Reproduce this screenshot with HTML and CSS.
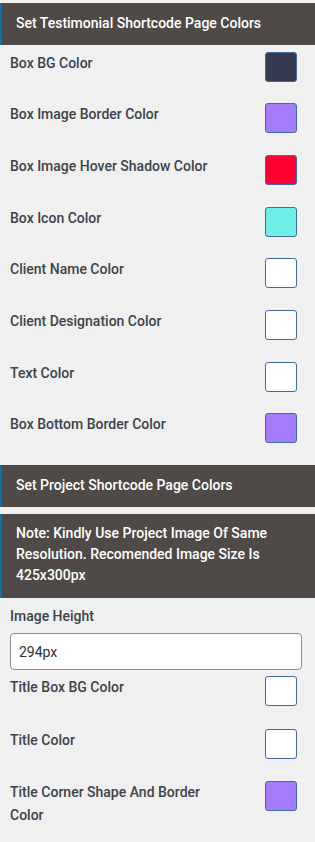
FILE: index.html
```html
<!DOCTYPE html>
<html>
<head>
<meta charset="utf-8">
<link rel="stylesheet" href="styles.css">
</head>
<body>
<div class="panel">
  <div class="section-head">Set Testimonial Shortcode Page Colors</div>
  <div class="row"><span class="label">Box BG Color</span><span class="swatch c-navy"></span></div>
  <div class="row"><span class="label">Box Image Border Color</span><span class="swatch c-purple"></span></div>
  <div class="row"><span class="label">Box Image Hover Shadow Color</span><span class="swatch c-red"></span></div>
  <div class="row"><span class="label">Box Icon Color</span><span class="swatch c-cyan"></span></div>
  <div class="row"><span class="label">Client Name Color</span><span class="swatch c-white"></span></div>
  <div class="row"><span class="label">Client Designation Color</span><span class="swatch c-white"></span></div>
  <div class="row"><span class="label">Text Color</span><span class="swatch c-white"></span></div>
  <div class="row"><span class="label">Box Bottom Border Color</span><span class="swatch c-purple"></span></div>

  <div class="section-head second">Set Project Shortcode Page Colors</div>
  <div class="note">Note: Kindly Use Project Image Of Same Resolution. Recomended Image Size Is 425x300px</div>

  <div class="field">
    <div class="label">Image Height</div>
    <input class="text-input" type="text" value="294px">
  </div>
  <div class="row tight"><span class="label">Title Box BG Color</span><span class="swatch c-white"></span></div>
  <div class="row"><span class="label">Title Color</span><span class="swatch c-white"></span></div>
  <div class="row"><span class="label narrow">Title Corner Shape And Border Color</span><span class="swatch c-purple"></span></div>
</div>
</body>
</html>
```

FILE: styles.css
```css
html, body {
  margin: 0;
  padding: 0;
  background: #f0f0f1;
}
body {
  font-family: Roboto, "Liberation Sans", sans-serif;
  font-size: 14px;
  color: #3c434a;
}
.panel {
  padding-top: 3px;
}
.section-head {
  background: #4f4a47;
  color: #ffffff;
  border-left: 2px solid #0a73b0;
  height: 41.5px;
  line-height: 41.5px;
  padding: 0 14px;
  font-weight: 500;
  font-size: 14px;
}
.section-head.second {
  margin-top: 7px;
}
.row {
  display: flex;
  justify-content: space-between;
  align-items: flex-start;
  height: 51.7px;
  padding: 7px 18px 0 10px;
  box-sizing: border-box;
}
.row.tight {
  padding-top: 6px;
}
.label {
  font-weight: 500;
  line-height: 23px;
}
.label.narrow {
  width: 200px;
}
.swatch {
  flex: none;
  width: 32px;
  height: 30px;
  box-sizing: border-box;
  border: 1px solid #3f6c9c;
  border-radius: 3px;
}
.c-navy { background: #353a50; }
.c-purple { background: #a67cfe; }
.c-red { background: #ff0033; }
.c-cyan { background: #6eeee6; }
.c-white { background: #ffffff; }
.note {
  margin-top: 7px;
  background: #4f4a47;
  color: #ffffff;
  border-left: 2px solid #0a73b0;
  padding: 9px 40px 12px 14px;
  line-height: 21.3px;
  font-weight: 500;
}
.field {
  padding: 7px 13px 0 10px;
}
.text-input {
  display: block;
  margin-top: 5px;
  width: 100%;
  height: 37px;
  box-sizing: border-box;
  border: 1px solid #8c8f94;
  border-radius: 4px;
  background: #fff;
  padding: 0 8px;
  font-family: Roboto, "Liberation Sans", sans-serif;
  font-size: 14px;
  color: #2c3338;
}
```
